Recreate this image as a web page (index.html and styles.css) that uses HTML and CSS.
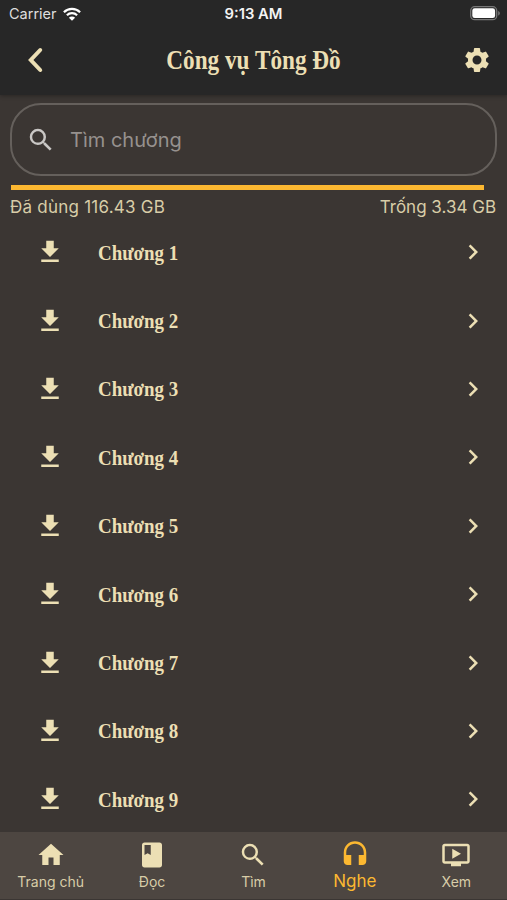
FILE: index.html
```html
<!DOCTYPE html>
<html lang="vi">
<head>
<meta charset="utf-8">
<title>Công vụ Tông Đồ</title>
<link rel="stylesheet" href="styles.css">
</head>
<body>
<svg class="defs" aria-hidden="true">
  <symbol id="download" viewBox="0 0 24 24"><path d="M19 9h-4V3H9v6H5l7 7 7-7zM5 18v2h14v-2H5z"/></symbol>
  <symbol id="next" viewBox="0 0 24 24"><path d="M10 6 8.59 7.41 13.17 12l-4.58 4.59L10 18l6-6z"/></symbol>
  <symbol id="search" viewBox="0 0 24 24"><path d="M15.5 14h-.79l-.28-.27A6.471 6.471 0 0 0 16 9.5 6.5 6.5 0 1 0 9.5 16c1.61 0 3.09-.59 4.23-1.57l.27.28v.79l5 4.99L20.49 19l-4.99-5zm-6 0C7.01 14 5 11.99 5 9.5S7.01 5 9.5 5 14 7.01 14 9.5 11.99 14 9.5 14z"/></symbol>
</svg>
<div class="screen">
  <header class="top">
    <div class="status">
      <div class="carrier"><span class="carrier-name">Carrier</span>
        <svg width="18" height="14" viewBox="0 0 18 14" fill="none" stroke="#fff" stroke-width="2.2"><path class="arcs" d="M.9 5.2a11.500 11.500 0 0 1 16.200 0M3.900 8.300a7.200 7.200 0 0 1 10.200 0"/><path class="dot" d="M9 13.800 5.900 10.700a4.400 4.400 0 0 1 6.200 0z" stroke="none"/></svg>
      </div>
      <div class="time">9:13 AM</div>
      <div class="battery"><svg width="31" height="15" viewBox="0 0 31 15"><rect x=".7" y=".7" width="26" height="13" rx="4" fill="none" stroke="#777" stroke-width="1.3"/><rect x="2.3" y="2.3" width="22.8" height="9.8" rx="2.4" fill="#fff"/><path d="M28.2 5c2.2 1 2.2 3.6 0 4.6z" fill="#777"/></svg></div>
    </div>
    <div class="bar">
      <svg class="back" width="18" height="28" viewBox="0 0 18 28"><path d="M14.2 4 4.8 14l9.4 10" fill="none" stroke="#ecdfb4" stroke-width="4" stroke-linecap="round"/></svg>
      <h1 class="title">Công vụ Tông Đồ</h1>
      <svg class="gear" width="30" height="30" viewBox="0 0 24 24"><path d="M19.14 12.94c.04-.3.06-.61.06-.94 0-.32-.02-.64-.07-.94l2.03-1.58a.49.49 0 0 0 .12-.61l-1.92-3.32a.488.488 0 0 0-.59-.22l-2.39.96c-.5-.38-1.03-.7-1.62-.94l-.36-2.54a.484.484 0 0 0-.48-.41h-3.84c-.24 0-.43.17-.47.41l-.36 2.54c-.59.24-1.13.57-1.62.94l-2.39-.96c-.22-.08-.47 0-.59.22L2.74 8.87c-.12.21-.08.47.12.61l2.03 1.58c-.05.3-.09.63-.09.94s.02.64.07.94l-2.03 1.58a.49.49 0 0 0-.12.61l1.92 3.32c.12.22.37.29.59.22l2.39-.96c.5.38 1.03.7 1.62.94l.36 2.54c.05.24.24.41.48.41h3.84c.24 0 .44-.17.47-.41l.36-2.54c.59-.24 1.13-.56 1.62-.94l2.39.96c.22.08.47 0 .59-.22l1.92-3.32c.12-.22.07-.47-.12-.61l-2.01-1.58zM12 15.6A3.61 3.61 0 0 1 8.4 12c0-1.98 1.62-3.6 3.6-3.6s3.6 1.62 3.6 3.6-1.62 3.6-3.6 3.6z"/></svg>
    </div>
  </header>
  <main class="content">
    <div class="search"><svg width="30" height="30"><use href="#search"/></svg><span class="placeholder">Tìm chương</span></div>
    <div class="meter"><div class="meter-fill"></div></div>
    <div class="storage"><span class="used">Đã dùng 116.43 GB</span><span class="free">Trống 3.34 GB</span></div>
    <ul class="list">
      <li class="row"><svg width="30" height="30"><use href="#download"/></svg><span class="name">Chương 1</span><svg width="30" height="30"><use href="#next"/></svg></li>
      <li class="row"><svg width="30" height="30"><use href="#download"/></svg><span class="name">Chương 2</span><svg width="30" height="30"><use href="#next"/></svg></li>
      <li class="row"><svg width="30" height="30"><use href="#download"/></svg><span class="name">Chương 3</span><svg width="30" height="30"><use href="#next"/></svg></li>
      <li class="row"><svg width="30" height="30"><use href="#download"/></svg><span class="name">Chương 4</span><svg width="30" height="30"><use href="#next"/></svg></li>
      <li class="row"><svg width="30" height="30"><use href="#download"/></svg><span class="name">Chương 5</span><svg width="30" height="30"><use href="#next"/></svg></li>
      <li class="row"><svg width="30" height="30"><use href="#download"/></svg><span class="name">Chương 6</span><svg width="30" height="30"><use href="#next"/></svg></li>
      <li class="row"><svg width="30" height="30"><use href="#download"/></svg><span class="name">Chương 7</span><svg width="30" height="30"><use href="#next"/></svg></li>
      <li class="row"><svg width="30" height="30"><use href="#download"/></svg><span class="name">Chương 8</span><svg width="30" height="30"><use href="#next"/></svg></li>
      <li class="row"><svg width="30" height="30"><use href="#download"/></svg><span class="name">Chương 9</span><svg width="30" height="30"><use href="#next"/></svg></li>
    </ul>
  </main>
  <nav class="tabs">
    <div class="tab"><svg width="30" height="30" viewBox="0 0 24 24"><path d="M10 20v-6h4v6h5v-8h3L12 3 2 12h3v8z"/></svg><span class="label">Trang chủ</span></div>
    <div class="tab"><svg width="30" height="30" viewBox="0 0 24 24"><path d="M18 2H6c-1.100 0-2 .9-2 2v16c0 1.100.9 2 2 2h12c1.100 0 2-.9 2-2V4c0-1.100-.9-2-2-2zM6 4h5v8l-2.500-1.500L6 12V4z"/></svg><span class="label">Đọc</span></div>
    <div class="tab"><svg width="30" height="30"><use href="#search"/></svg><span class="label">Tìm</span></div>
    <div class="tab active"><svg width="30" height="30" viewBox="0 0 24 24"><path d="M12 1a9 9 0 0 0-9 9v7c0 1.660 1.340 3 3 3h3v-8H5v-2c0-3.870 3.130-7 7-7s7 3.130 7 7v2h-4v8h3c1.660 0 3-1.340 3-3v-7a9 9 0 0 0-9-9z"/></svg><span class="label">Nghe</span></div>
    <div class="tab"><svg width="30" height="30" viewBox="0 0 24 24"><path d="M21 3H3c-1.110 0-2 .89-2 2v12c0 1.100.89 2 2 2h5v2h8v-2h5c1.100 0 1.990-.9 1.990-2L23 5c0-1.110-.9-2-2-2zm0 14H3V5h18v12zm-5-6-7 4V7z"/></svg><span class="label">Xem</span></div>
  </nav>
</div>
</body>
</html>
```
FILE: styles.css
```css
* { box-sizing: border-box; }
body { margin: 0; background: #3b3633; color: #ecdfb4; font-family: Inter, "Liberation Sans", sans-serif; }
svg { display: block; flex: none; fill: #ecdfb4; }
.defs { display: none; }
.screen { width: 507px; height: 900px; display: flex; flex-direction: column; overflow: hidden; }
.top { height: 95px; flex: none; background: #272727; box-shadow: 0 1px 4px rgba(0, 0, 0, .3); }
.status { height: 27px; display: grid; grid-template-columns: 1fr auto 1fr; align-items: center; padding: 0 6px 0 9px; color: #f4f4f4; font-size: 14.500px; }
.carrier { display: flex; align-items: center; gap: 6px; color: #dedede; }
.arcs { fill: none; }
.dot { fill: #fff; }
.time { font-weight: 600; font-size: 14.800px; margin-left: -3px; }
.battery { display: flex; justify-content: flex-end; }
.bar { height: 66px; display: grid; grid-template-columns: 60px 1fr 60px; align-items: center; }
.back { margin-left: 26px; }
.title { margin: 0; text-align: center; font: 700 27px/32px "Liberation Serif", serif; white-space: nowrap; transform: scaleX(.86); }
.gear { margin-left: 15px; }
.content { flex: 1; min-height: 0; padding: 8px 10px 0; overflow: hidden; }
.search { height: 73px; border: 2px solid #65605c; border-radius: 31px; display: flex; align-items: center; gap: 14px; padding-left: 14px; color: #96918e; font-size: 20px; }
.search svg { fill: #c9c7c5; }
.meter { height: 5px; margin: 9px 0 0 1px; }
.meter-fill { width: 473px; height: 5px; background: #fcb831; }
.storage { height: 28px; display: flex; justify-content: space-between; padding: 6px 1px 0 0; font-size: 17px; line-height: 23px; color: #d8cda8; }
.used { letter-spacing: .23px; }
.list { list-style: none; margin: 0; padding: 0; }
.row { height: 68.400px; display: flex; align-items: center; padding: 0 9px 0 25px; }
.name { flex: 1; margin-left: 33px; padding-top: 1px; font: 700 22px/28px "Liberation Serif", serif; transform: scaleX(.86); transform-origin: left; }
.tabs { height: 68px; flex: none; display: grid; grid-template-columns: repeat(5, 1fr); background: #4d4641; border-bottom: 1px solid #3b3633; }
.tab { display: flex; flex-direction: column; align-items: center; padding-top: 8px; }
.label { font-size: 14px; line-height: 20px; margin-top: 2px; color: #d8cda8; }
.active svg { fill: #fcb831; }
.active .label { font-size: 17px; margin-top: 1px; color: #fcb831; }
```
